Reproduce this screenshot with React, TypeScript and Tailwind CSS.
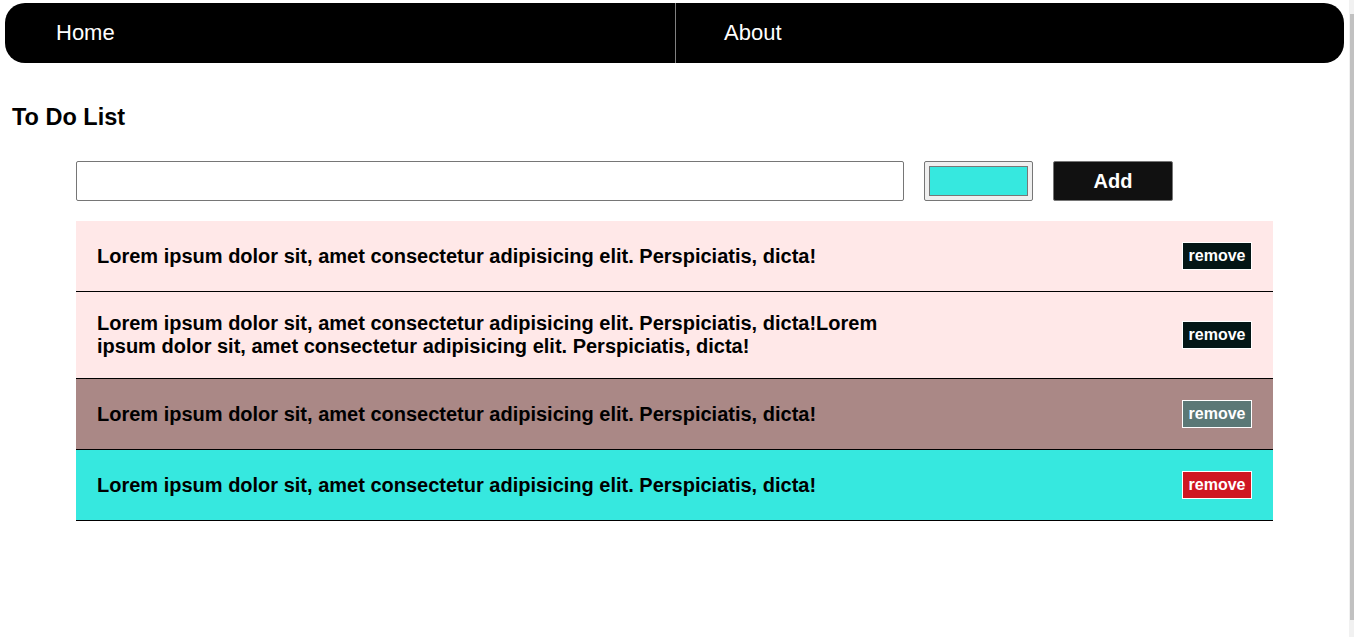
import React from "react";

const items = [
  {
    text: "Lorem ipsum dolor sit, amet consectetur adipisicing elit. Perspiciatis, dicta!",
    bg: "bg-[#ffe8e8]",
    btn: "bg-[#041616]",
  },
  {
    text: "Lorem ipsum dolor sit, amet consectetur adipisicing elit. Perspiciatis, dicta!Lorem ipsum dolor sit, amet consectetur adipisicing elit. Perspiciatis, dicta!",
    bg: "bg-[#ffe8e8]",
    btn: "bg-[#041616]",
  },
  {
    text: "Lorem ipsum dolor sit, amet consectetur adipisicing elit. Perspiciatis, dicta!",
    bg: "bg-[#aa8886]",
    btn: "bg-[#5b7876]",
  },
  {
    text: "Lorem ipsum dolor sit, amet consectetur adipisicing elit. Perspiciatis, dicta!",
    bg: "bg-[#36e8df]",
    btn: "bg-[#cf1622]",
  },
];

export default function App() {
  return (
    <div
      className="flex h-[637px] overflow-hidden bg-white text-black"
      style={{ fontFamily: '"Liberation Sans", Arial, sans-serif' }}
    >
      <div className="flex-1 min-w-0">
        <nav className="mx-[5px] mt-[3px] grid h-[60px] grid-cols-[670px_1fr] rounded-[20px] bg-black text-white">
          <div className="flex items-center pb-[2px] pl-[51px] text-[22px]">Home</div>
          <div className="flex items-center border-l border-[#808080] pb-[2px] pl-[48px] text-[22px]">
            About
          </div>
        </nav>

        <h2 className="mt-[40px] pl-[12px] text-[23.5px] font-bold leading-[28px]">To Do List</h2>

        <div className="px-[76px]">
          <div className="mt-[30px] flex items-center gap-[20px]">
            <input
              type="text"
              className="h-[40px] w-[828px] rounded-[2px] border border-[#767676] bg-white px-2 outline-none"
            />
            <div className="flex h-[40px] w-[109px] items-center justify-center rounded-[2px] border border-[#767676] bg-[#efefef]">
              <div className="h-[30px] w-[99px] border border-[#777777] bg-[#36e8df]" />
            </div>
            <button className="h-[40px] w-[120px] rounded-[2px] border border-[#767676] bg-[#111111] text-[20px] font-bold text-white">
              Add
            </button>
          </div>

          <ul className="mt-[20px]">
            {items.map((it, i) => (
              <li
                key={i}
                className={`flex items-center justify-between border-b border-black py-[20px] pl-[21px] pr-[20px] ${it.bg}`}
              >
                <p className="w-[800px] text-[20px] font-bold leading-[23px]">{it.text}</p>
                <button
                  className={`m-px flex h-[28px] w-[70px] items-center justify-center border border-white text-[16px] font-bold text-white ${it.btn}`}
                >
                  remove
                </button>
              </li>
            ))}
          </ul>
        </div>
      </div>
      <div className="w-[5px] bg-[#f1f1f1]">
        <div className="ml-px mt-[14px] h-[606px] bg-[#c1c1c1]" />
      </div>
    </div>
  );
}
